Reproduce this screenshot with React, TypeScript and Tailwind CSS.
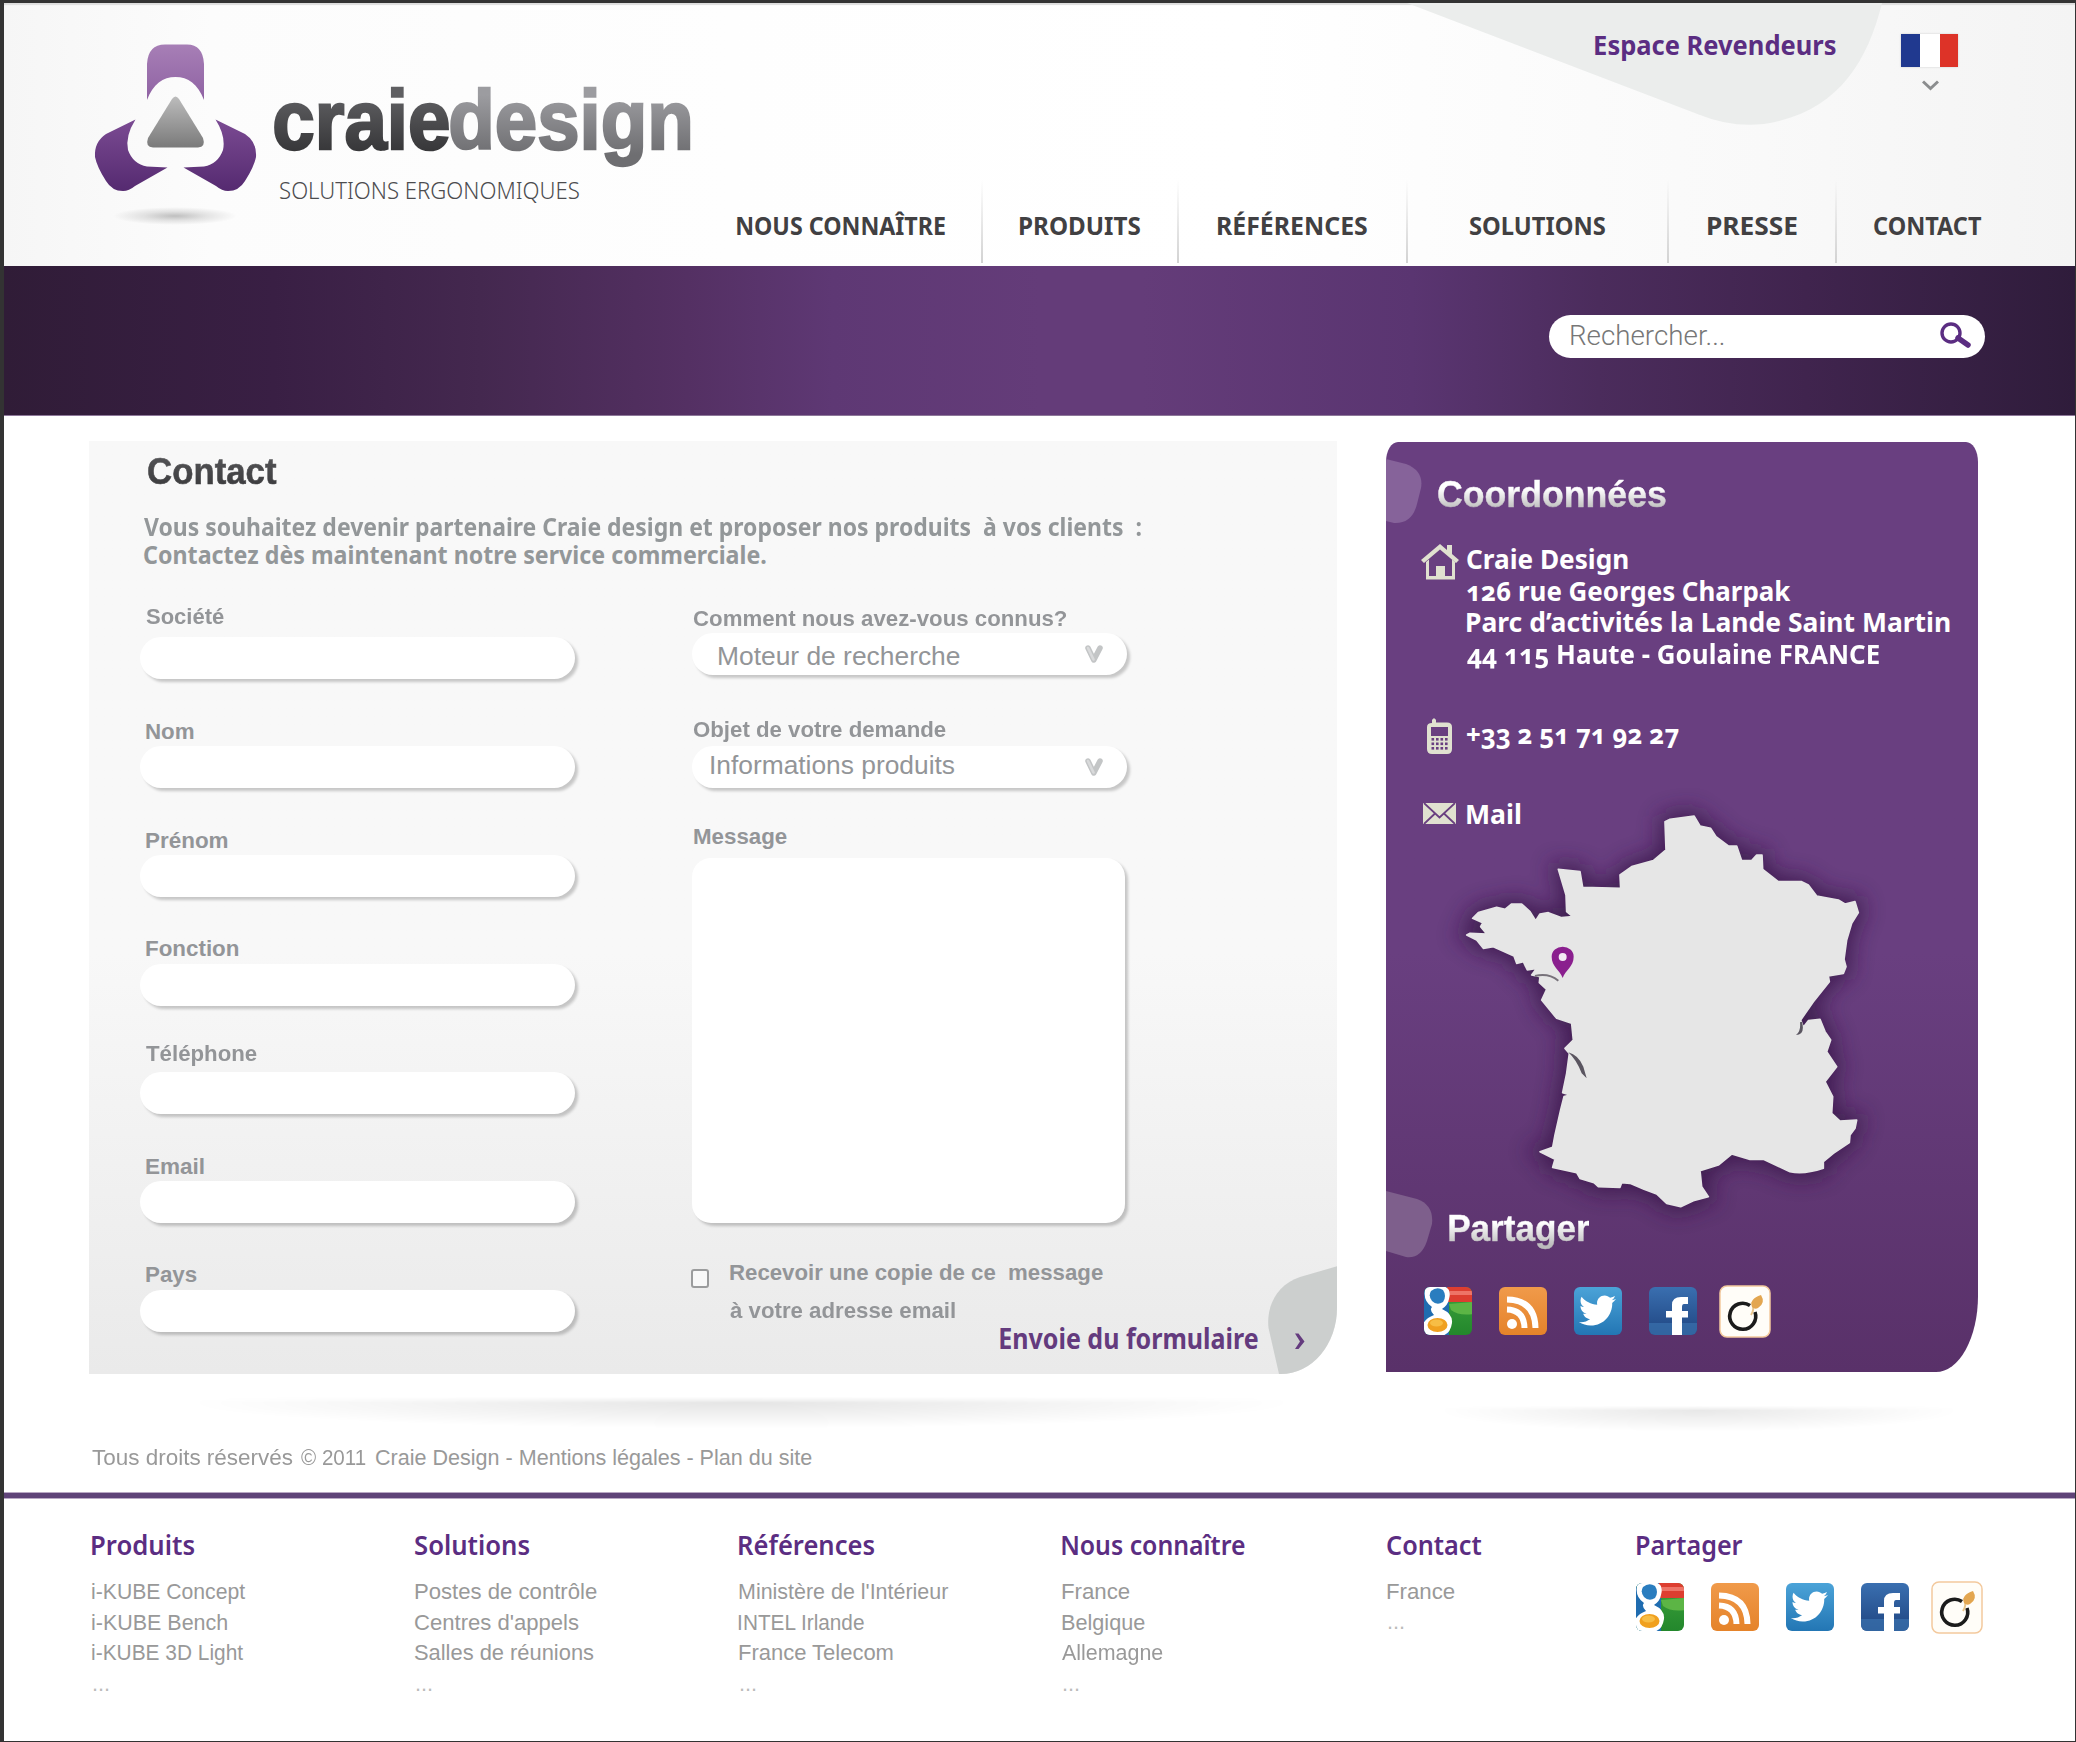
import { useLayoutEffect, useRef, useState } from "react";
import { FaTwitter } from "react-icons/fa";

const NOTO = "font-['Noto_Sans',sans-serif]";
const ARIAL = "font-['Liberation_Sans',Arial,sans-serif]";

/** One line of text condensed or widened so that its ink is exactly `w` pixels wide. */
function Fit({ w, children, className = "" }: { w: number; children: string; className?: string }) {
  const ref = useRef<HTMLSpanElement>(null);
  const [transform, setTransform] = useState("none");
  useLayoutEffect(() => {
    if (!ref.current) return;
    const cs = getComputedStyle(ref.current);
    const ctx = document.createElement("canvas").getContext("2d");
    if (!ctx) return;
    ctx.font = `${cs.fontWeight} ${cs.fontSize} ${cs.fontFamily}`;
    const m = ctx.measureText(children);
    const k = w / (m.actualBoundingBoxLeft + m.actualBoundingBoxRight);
    setTransform(`translateX(${m.actualBoundingBoxLeft * k}px) scaleX(${k})`);
  }, [w, children]);
  return (
    <span className="block shrink-0" style={{ width: w }}>
      <span ref={ref} className={`block w-max origin-left whitespace-pre ${className}`} style={{ transform }}>
        {children}
      </span>
    </span>
  );
}

const WING =
  "M135.500 119.500L106 134Q94 142 95 157Q97 167 106 181Q112 191 123 191Q129 191 135 186L167.500 167.500L147 166.500Q133 164 128 150Q125 136 135.500 119.500Z";

function Logo() {
  return (
    <svg className="mt-[37px] ml-[81px] h-[188px] w-[180px] shrink-0" viewBox="85 40 180 188">
      <defs>
        <linearGradient id="lt" x1="0" y1="0" x2="0" y2="1">
          <stop offset="0" stopColor="#a77fb6" />
          <stop offset="1" stopColor="#8f62a3" />
        </linearGradient>
        <linearGradient id="ls" x1="0" y1="0" x2="0" y2="1">
          <stop offset="0" stopColor="#7b4b93" />
          <stop offset="1" stopColor="#552a70" />
        </linearGradient>
        <linearGradient id="lg" x1="0" y1="0" x2="0" y2="1">
          <stop offset="0" stopColor="#bcbcbc" />
          <stop offset="1" stopColor="#7a7a7a" />
        </linearGradient>
        <radialGradient id="lsh">
          <stop offset="0" stopColor="#000" stopOpacity=".24" />
          <stop offset=".5" stopColor="#000" stopOpacity=".1" />
          <stop offset="1" stopColor="#000" stopOpacity="0" />
        </radialGradient>
      </defs>
      <path fill="url(#lt)" d="M147 100V64Q148 44.500 165 44.500H187Q203 44.500 204 64V100C198 84 188 77 175.500 77S153 84 147 100Z" />
      <path fill="url(#lg)" d="M172 99Q175.500 94 179 99L203 138Q206 147 198 147.500H153Q145 147 148 138Z" />
      <path fill="url(#ls)" d={WING} />
      <path fill="url(#ls)" transform="matrix(-1 0 0 1 351 0)" d={WING} />
      <ellipse cx="175" cy="216" rx="62" ry="9" fill="url(#lsh)" />
    </svg>
  );
}

const NAV: [string, number][] = [
  ["NOUS CONNAÎTRE", 208],
  ["PRODUITS", 120],
  ["RÉFÉRENCES", 149],
  ["SOLUTIONS", 135],
  ["PRESSE", 89],
  ["CONTACT", 107],
];

function Header() {
  return (
    <header className="relative flex h-[263px] shadow-[inset_0_3px_1px_-1px_#ddd] bg-[linear-gradient(90deg,#f6f6f6,#fcfcfc_10%,#fefefe_35%,#fff_60%,#f9f9f9_85%,#f4f4f4)]">
      <svg className="absolute top-0 left-[1403px] h-[124px] w-[478px]" viewBox="1407 3 478 124">
        <path fill="#ebedec" d="M1407 3L1700 115Q1740 131 1779 121C1840 106 1868 60 1882 3Z" />
      </svg>
      <Logo />
      <div className="ml-[10px] w-[421px] pt-[67px]">
        <div className={`flex gap-[3px] ${ARIAL} text-[84px] leading-[100px] font-bold [-webkit-text-stroke:2.5px_transparent]`}>
          <Fit w={173} className="bg-linear-to-b from-[#5f5f62] from-25% to-[#38383a] to-80% bg-clip-text text-transparent">craie</Fit>
          <Fit w={239} className="bg-linear-to-b from-[#9c9ca0] from-25% to-[#6e6e71] to-85% bg-clip-text text-transparent">design</Fit>
        </div>
        <div className="mt-[6px] ml-[5px]">
          <Fit w={299} className={`${NOTO} text-[23.5px] leading-[28px] font-light text-[#4c4c4f]`}>SOLUTIONS ERGONOMIQUES</Fit>
        </div>
      </div>
      <div className="relative flex-1">
        <div className="flex h-[177px] pl-[899px]">
          <div className="pt-[26px]">
            <Fit w={241} className={`${NOTO} text-[27px] leading-[32px] font-bold text-[#5b2d82]`}>Espace Revendeurs</Fit>
          </div>
          <div className="ml-[65px] flex flex-col items-center pt-[31px]">
            <div className="flex h-[33px] w-[57px] shadow-[0_0_2px_#ccc]">
              <div className="w-[19px] bg-[#20398f]" />
              <div className="w-[20px] bg-white" />
              <div className="w-[18px] bg-[#dd3328]" />
            </div>
            <svg className="mt-[13px] ml-[2px] h-[11px] w-[17px]" viewBox="0 0 17 11" fill="none" stroke="#8b8d8e" strokeWidth="3">
              <path d="M1 1.500L8.500 8.500L16 1.500" />
            </svg>
          </div>
        </div>
        <nav className="ml-[5px] grid h-[86px] grid-cols-[282px_196px_229px_261px_168px_181px]">
          {NAV.map(([label, w], i) => (
            <div key={label} className="flex">
              <div className="flex flex-1 justify-center pt-[30px]">
                <Fit w={w} className={`${NOTO} text-[25px] leading-[30px] font-bold text-[#414042]`}>{label}</Fit>
              </div>
              {i < 5 && <div className="h-[83px] w-[2px] bg-linear-to-b from-transparent to-[#d2d2d2]" />}
            </div>
          ))}
        </nav>
      </div>
    </header>
  );
}

function Banner() {
  return (
    <div className="flex h-[150px] justify-end border-b border-[#8d7799] bg-[linear-gradient(90deg,#301c37,#391f44_13%,#44284f_23%,#543063_33%,#5e3874_40%,#643c79_50%,#643c79_55%,#5a3571_68%,#4b2c5c_77%,#40244e_87%,#372044_94%,#2f1c3b)] pt-[49px] pr-[90px]">
      <div className="flex h-[43px] w-[436px] rounded-[22px] bg-white pr-[13px] pl-[22px]">
        <div className="pt-[5px]">
          <Fit w={153} className="font-['Roboto',sans-serif] text-[27px] leading-[32px] font-light text-[#777]">Rechercher...</Fit>
        </div>
        <svg className="mt-[7px] ml-auto h-[27px] w-[32px]" viewBox="0 0 32 27" fill="none" stroke="#5b2d82">
          <circle cx="11" cy="11" r="9" strokeWidth="3.400" />
          <path d="M18 16L28 23" strokeWidth="5.500" strokeLinecap="round" />
        </svg>
      </div>
    </div>
  );
}

const FIELDS = [
  { label: "Société", w: 78, box: "mt-[36px]", gap: "mt-2" },
  { label: "Nom", w: 48, box: "mt-[41px]", gap: "mt-[2px]" },
  { label: "Prénom", w: 82, box: "mt-[41px]", gap: "mt-[2px]" },
  { label: "Fonction", w: 93, box: "mt-[40px]", gap: "mt-[3px]" },
  { label: "Téléphone", w: 111, box: "mt-[36px]", gap: "mt-[6px]" },
  { label: "Email", w: 58, box: "mt-[41px]", gap: "mt-[2px]" },
  { label: "Pays", w: 51, box: "mt-[40px]", gap: "mt-[3px]" },
];

const LABEL = "font-['Liberation_Sans',Arial,sans-serif] text-[22px] leading-[24px] font-bold text-[#939598]";
const FIELD = "bg-white shadow-[3px_3px_3px_rgba(0,0,0,0.2)]";

function SelectBox({ text, w, pad }: { text: string; w: number; pad: string }) {
  return (
    <div className={`flex h-[42px] w-[435px] rounded-[21px] pr-[23px] ${FIELD} ${pad}`}>
      <Fit w={w} className={`${ARIAL} text-[26px] leading-[30px] text-[#939598]`}>{text}</Fit>
    </div>
  );
}

function Vee() {
  return (
    <svg className="-mt-[30px] ml-[393px] h-[18px] w-[18px]" viewBox="0 0 18 18" fill="none" strokeLinejoin="round" strokeLinecap="round">
      <path d="M3 3L8.800 15L15 3" stroke="#c3c5c6" strokeWidth="5.500" />
      <path d="M3 3L8.500 14.500" stroke="#d9dadb" strokeWidth="2.600" />
    </svg>
  );
}

function ContactForm() {
  return (
    <section className="relative h-[933px] w-[1248px] overflow-hidden rounded-br-[56px_66px] bg-linear-to-b from-[#f8f8f8] from-55% to-[#eaeaea] pt-[7px]">
      <div className="ml-[59px]">
        <Fit w={129} className={`${ARIAL} bg-linear-to-b from-[#5b5b5e] to-[#363638] bg-clip-text text-[37.5px] leading-[46px] font-bold text-transparent [-webkit-text-stroke:0.6px_transparent]`}>Contact</Fit>
      </div>
      <div className={`mt-[19px] ml-[55px] ${NOTO} text-[24.5px] leading-[28px] font-bold text-[#939799]`}>
        <Fit w={997}>Vous souhaitez devenir partenaire Craie design et proposer nos produits  à vos clients  :</Fit>
        <Fit w={622}>Contactez dès maintenant notre service commerciale.</Fit>
      </div>
      <div className="flex">
        <div className="ml-[51px] w-[435px]">
          {FIELDS.map((f) => (
            <div key={f.label} className={f.box}>
              <div className="ml-[5.5px]">
                <Fit w={f.w} className={LABEL}>{f.label}</Fit>
              </div>
              <div className={`h-[42px] rounded-[21px] ${FIELD} ${f.gap}`} />
            </div>
          ))}
        </div>
        <div className="ml-[117px] flex-1">
          <div className="mt-[38px] mb-[2px] ml-px">
            <Fit w={374} className={LABEL}>Comment nous avez-vous connus?</Fit>
          </div>
          <SelectBox text="Moteur de recherche" w={241} pad="pt-2 pl-[26.5px]" />
          <Vee />
          <div className="mt-[55px] mb-[4px] ml-px">
            <Fit w={253} className={LABEL}>Objet de votre demande</Fit>
          </div>
          <SelectBox text="Informations produits" w={244} pad="pt-[4px] pl-[19px]" />
          <Vee />
          <div className="mt-[49px] mb-[9px] ml-[2px]">
            <Fit w={93} className={LABEL}>Message</Fit>
          </div>
          <div className={`h-[365px] w-[433px] rounded-[19px] ${FIELD}`} />
          <div className="mt-[31px] flex">
            <div className="mt-[15px] -ml-px h-[19px] w-[18px] rounded-[3px] border-2 border-[#9b9c9d] bg-[#f8f8f8]" />
            <div className={`ml-[21px] ${ARIAL} text-[22px] leading-[38px] font-bold text-[#939598]`}>
              <Fit w={373}>Recevoir une copie de ce  message</Fit>
              <Fit w={225}>à votre adresse email</Fit>
            </div>
          </div>
          <div className="relative z-10 -mt-[9px] ml-[308px] flex">
            <Fit w={258} className={`${NOTO} text-[28px] leading-[34px] font-bold text-[#643b7e]`}>Envoie du formulaire</Fit>
            <svg className="mt-[12px] ml-[36px] h-[17px] w-[11px]" viewBox="0 0 11 17" fill="#643b7e">
              <path d="M1 .5H4.500L10.500 8.500L4.500 16H1L6 8.500Z" />
            </svg>
          </div>
        </div>
      </div>
      <svg className="absolute right-0 bottom-0 h-[108px] w-[70px]" viewBox="1267 1266 70 108">
        <path fill="#cccfce" d="M1338 1266L1300 1277C1278 1284 1266 1305 1268.500 1328L1279 1374H1338Z" />
      </svg>
    </section>
  );
}

function Tile({ id, top, bottom, children }: { id: string; top: string; bottom: string; children: React.ReactNode }) {
  return (
    <svg className="h-[50px] w-[50px]" viewBox="0 0 50 50">
      <defs>
        <linearGradient id={id} x1="0" y1="0" x2="0" y2="1">
          <stop offset="0" stopColor={top} />
          <stop offset="1" stopColor={bottom} />
        </linearGradient>
        <clipPath id={`${id}c`}>
          <rect x="1" y="1" width="48" height="48" rx="6" />
        </clipPath>
      </defs>
      <g clipPath={`url(#${id}c)`}>
        <rect x="1" y="1" width="48" height="48" fill={`url(#${id})`} />
        {children}
      </g>
    </svg>
  );
}

function Socials({ id }: { id: string }) {
  return (
    <div className="flex items-center gap-[25px]">
      <Tile id={`${id}g`} top="#3da23c" bottom="#23872c">
        <rect width="26" height="50" fill="#1f6cb0" />
        <path d="M24 0H50V16H24Z" fill="#dd3e30" />
        <path d="M27 5H50V9H27Z" fill="#ee7467" />
        <path d="M26 18L50 16V28Q36 30 28 24Z" fill="#5cb545" />
        <path d="M2 4Q4 -2 14 0Q30 -1 26 13Q25 19 19 23Q30 28 29 37Q27 51 14 50L0 50V38Q3 32 11 29Q6 24 9 21Q0 15 2 4Z" fill="#fff" />
        <path d="M8 5Q14 0 20 4Q24 10 20 16Q14 20 9 15Q5 10 8 5Z" fill="#2a7dbf" />
        <ellipse cx="14.500" cy="39" rx="10" ry="7" fill="#f0a01f" />
        <ellipse cx="13.500" cy="37" rx="6.500" ry="3.500" fill="#f7bd45" />
      </Tile>
      <Tile id={`${id}r`} top="#f09a4a" bottom="#e5832a">
        <circle cx="14" cy="38" r="5" fill="#fff" />
        <path d="M9 23.500Q26 24 26.500 42M9 13.500Q37 14 37.500 42" stroke="#fff" strokeWidth="6" fill="none" />
      </Tile>
      <Tile id={`${id}t`} top="#4ba3d8" bottom="#2376b4">
        <g transform="translate(6 6)" color="#fff">
          <FaTwitter size={37} />
        </g>
      </Tile>
      <Tile id={`${id}f`} top="#3a6fb0" bottom="#1f4581">
        <rect y="37" width="50" height="13" fill="#3a72ae" opacity=".7" />
        <path d="M40 11V18H36Q34 18 34 21V25H40V31.500H34V50H24V31.500H18V25H24V19Q24 11 33 11Z" fill="#fff" />
      </Tile>
      <svg className="-ml-[4px] h-[53px] w-[52px]" viewBox="0 0 52 53">
        <rect x="1" y="1" width="50" height="51" rx="7" fill="#fffdf8" stroke="#f3c99d" strokeWidth="1.500" />
        <path d="M31 20.500A13 13 0 1 0 36 27" fill="none" stroke="#1b1b1b" strokeWidth="3.600" />
        <path d="M32 30Q36 24 33 17" fill="none" stroke="#e9c58b" strokeWidth="2" />
        <path d="M33 22Q30 14 42 10Q47 18 39 23Q36 25 33 22Z" fill="#e3a650" />
      </svg>
    </div>
  );
}

const FRANCE =
  "M675 95L690 88L762 78L780 108L812 115L828 140L865 168L890 168L905 212L935 212L950 195L966 195L968 238L1015 275L1085 275L1105 285L1130 318L1195 330L1215 342L1245 335L1255 368L1235 400L1220 450L1212 508L1218 530L1210 550L1165 558L1168 575L1120 635L1082 690L1090 712L1105 692L1140 688L1155 725L1172 750L1160 785L1190 830L1155 875L1178 920L1175 970L1200 993L1250 990L1245 1015L1230 1035L1228 1058L1180 1090L1150 1115V1135Q1090 1155 1050 1145L970 1108H930L875 1092L835 1125L780 1142L785 1190L805 1220L760 1232L722 1250L680 1240L650 1212L612 1198L570 1180L545 1178L540 1192L475 1190L462 1178L420 1165L410 1148L338 1132L345 1108L300 1085L338 1072L345 1035L362 960L372 920L390 915L368 908L380 850L388 790L375 775L400 750L395 700L350 685L305 630L320 598L298 578L300 560L275 555L290 535L262 540L250 515L230 520L222 498L160 470L130 475L110 450L80 435L90 430L140 432L122 410L128 398L98 385L115 368L170 352L195 358L215 342L245 342L270 365L287 392L300 372L325 368L365 383L398 380L380 365L378 315L355 238L420 245L428 292L542 295L540 255L575 230L640 212L678 180Z";

function FranceMap() {
  return (
    <svg className="-mt-[41px] ml-[54.5px] h-[440px] w-[460px] overflow-visible" viewBox="0 0 1380 1320">
      <filter id="ms" x="-20%" y="-20%" width="140%" height="140%">
        <feGaussianBlur stdDeviation="32" />
      </filter>
      <path d={FRANCE} fill="#341545" stroke="#341545" strokeWidth="36" opacity=".75" filter="url(#ms)" />
      <path d={FRANCE} fill="#e6e6e6" stroke="#e6e6e6" strokeWidth="5" strokeLinejoin="round" />
      <path d="M385 787Q415 795 430 830L440 865L425 850Q410 810 385 787ZM1086 695Q1096 735 1068 735Q1083 725 1080 697Z" fill="#5a5560" />
      <path d="M285 558Q325 548 355 572" stroke="#77727a" strokeWidth="6" fill="none" />
      <path d="M368 564C360 540 335 530 335 500A33 30 0 0 1 401 500C401 530 376 540 368 564Z" fill="#8a1f8e" />
      <circle cx="368" cy="501" r="12" fill="#f3eaf4" />
    </svg>
  );
}

function ContactInfo() {
  const white = `${NOTO} text-[26.5px] leading-[31.6px] font-bold text-white oldstyle-nums`;
  return (
    <aside className="relative mt-px ml-[48.5px] h-[930px] w-[592.5px] rounded-t-[12px_20px] rounded-br-[42px_76px] bg-linear-to-b from-[#693f80] from-55% to-[#593169] pt-[27px]">
      <svg className="absolute top-[16px] left-0 h-[66px] w-[36px]" viewBox="0 0 36 66">
        <path fill="#86639a" d="M0 1L20 6Q38 13 35 30L31 46Q26 66 8 65L0 63Z" />
      </svg>
      <svg className="absolute top-[748px] left-0 h-[68px] w-[47px]" viewBox="0 0 47 68">
        <path fill="#7e5f8c" d="M0 1L31 9Q48 15 46 34L41 51Q35 69 20 67L0 61Z" />
      </svg>
      <div className="ml-[52.5px]">
        <Fit w={228} className={`${ARIAL} bg-linear-to-b from-white from-40% to-[#bcbcbc] to-80% bg-clip-text text-[37.5px] leading-[50px] font-bold text-transparent [-webkit-text-stroke:0.5px_transparent]`}>Coordonnées</Fit>
      </div>
      <div className="mt-[25px] flex pl-[35.5px]">
        <div className="w-[46px]">
          <svg className="h-[36px] w-[38px]" viewBox="0 0 38 36" fill="#e0e1d0">
            <path d="M19 0L26 6V1H31V10L38 16L35 19L19 5.500L3 19L0 16Z" />
            <path d="M5 18L8 15.500V32H15V22H24V32H31V15.500L34 18V35.500H5Z" />
          </svg>
        </div>
        <div className={white}>
          <Fit w={161}>Craie Design</Fit>
          <Fit w={323}>126 rue Georges Charpak</Fit>
          <Fit w={483}>Parc d’activités la Lande Saint Martin</Fit>
          <Fit w={411}>44 115 Haute - Goulaine FRANCE</Fit>
        </div>
      </div>
      <div className="mt-[49px] flex pl-[35.5px]">
        <div className="-mt-px h-[31.6px] w-[46px] pl-[6px]">
          <svg className="h-[36px] w-[25px]" viewBox="0 0 25 36">
            <path fill="#e0e1d0" d="M5 5V2Q7 -1.500 9 2V4.500H20Q25 4.500 25 9V31Q25 36 20 36H5Q0 36 0 31V9Q0 5 5 5Z" />
            <rect x="4" y="9" width="17" height="9" fill="#693f80" />
            <g fill="#693f80">
              {[20, 24.5, 29].map((y) => [4.5, 9, 13.5, 18].map((x) => <rect key={`${x}-${y}`} x={x} y={y} width="2.600" height="2.600" />))}
            </g>
          </svg>
        </div>
        <Fit w={209} className={white}>+33 2 51 71 92 27</Fit>
      </div>
      <div className="mt-[48px] flex pl-[35.5px]">
        <div className="w-[46px] pt-[4px] pl-[2px]">
          <svg className="h-[21px] w-[33px]" viewBox="0 0 33 21">
            <rect width="33" height="21" fill="#e0e1d0" />
            <path d="M1 0L16.500 14.500L32 0M1 21L12 10.500M32 21L21 10.500" stroke="#693f80" strokeWidth="1.800" fill="none" />
          </svg>
        </div>
        <Fit w={53} className={white}>Mail</Fit>
      </div>
      <FranceMap />
      <div className="relative -mt-[27px] ml-[63.5px]">
        <Fit w={141} className={`${ARIAL} bg-linear-to-b from-white from-40% to-[#bcbcbc] to-85% bg-clip-text text-[37.5px] leading-[50px] font-bold text-transparent [-webkit-text-stroke:0.5px_transparent]`}>Partager</Fit>
      </div>
      <div className="mt-[32px] ml-[37.5px]">
        <Socials id="a" />
      </div>
    </aside>
  );
}

const COLUMNS: { title: string; w: number; items: [string, number][]; dots: string }[] = [
  { title: "Produits", w: 102, items: [["i-KUBE Concept", 153], ["i-KUBE Bench", 135], ["i-KUBE 3D Light", 151]], dots: "mt-0" },
  { title: "Solutions", w: 114, items: [["Postes de contrôle", 182], ["Centres d'appels", 164], ["Salles de réunions", 179]], dots: "mt-0" },
  { title: "Références", w: 135, items: [["Ministère de l'Intérieur", 209], ["INTEL Irlande", 126], ["France Telecom", 154]], dots: "mt-0" },
  { title: "Nous connaître", w: 183, items: [["France", 68], ["Belgique", 83], ["Allemagne", 101]], dots: "mt-0" },
  { title: "Contact", w: 95, items: [["France", 68]], dots: "-mt-px" },
];

function Footer() {
  const head = `${NOTO} text-[26.5px] leading-[32px] font-semibold text-[#5b2d82]`;
  return (
    <footer className="grid grid-cols-[323px_324px_323px_325px_250px_1fr] pt-[29.5px] pl-[88px]">
      {COLUMNS.map((c) => (
        <div key={c.title}>
          <Fit w={c.w} className={head}>{c.title}</Fit>
          <div className={`mt-[16.5px] ${ARIAL} text-[22px] leading-[30.5px] text-[#999]`}>
            {c.items.map(([t, w]) => (
              <Fit key={t} w={w}>{t}</Fit>
            ))}
            <div className={c.dots}>
              <Fit w={15} className="ml-[2px] text-[#bbb]">...</Fit>
            </div>
          </div>
        </div>
      ))}
      <div>
        <Fit w={106} className={head}>Partager</Fit>
        <div className="mt-[20px] -ml-[2px]">
          <Socials id="b" />
        </div>
      </div>
    </footer>
  );
}

export default function App() {
  return (
    <div className="h-[1742px] w-[2076px] overflow-hidden bg-[#333] pt-[3px] pr-px pb-px pl-[4px]">
      <div className="h-full overflow-hidden bg-white">
        <Header />
        <Banner />
        <main className="flex pt-[25px] pl-[85px]">
          <ContactForm />
          <ContactInfo />
        </main>
        <div className="flex h-[70px] pt-[22px] pl-[185px]">
          <div className="h-[34px] w-[1105px] bg-[radial-gradient(50%_75%_at_50%_20%,rgba(0,0,0,0.1),transparent)] [mask-image:linear-gradient(transparent_2%,#000_20%)]" />
          <div className="mt-[9px] ml-[145px] h-[28px] w-[520px] bg-[radial-gradient(50%_75%_at_50%_20%,rgba(0,0,0,0.09),transparent)] [mask-image:linear-gradient(transparent_2%,#000_20%)]" />
        </div>
        <div className={`ml-[88px] flex ${ARIAL} text-[22px] leading-[28px] text-[#999]`}>
          <Fit w={201}>Tous droits réservés</Fit>
          <div className="mr-[10px] ml-2">
            <Fit w={65}>© 2011</Fit>
          </div>
          <Fit w={436}>Craie Design - Mentions légales - Plan du site</Fit>
        </div>
        <div className="mt-[20px] h-[7px] border-y border-[#b9a8c4] bg-[#5f4378]" />
        <Footer />
      </div>
    </div>
  );
}
